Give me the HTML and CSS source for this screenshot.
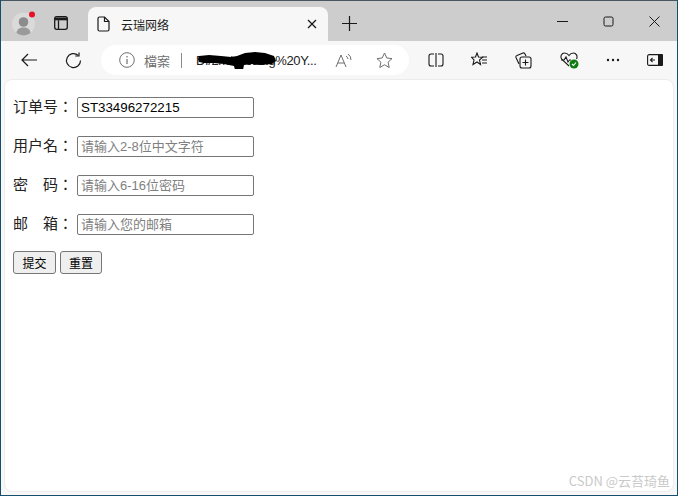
FILE: index.html
```html
<!DOCTYPE html>
<html lang="zh-CN">
<head>
<meta charset="utf-8">
<title>云瑞网络</title>
<link rel="stylesheet" href="styles.css">
</head>
<body>
<div class="window">
  <header class="titlebar">
    <div class="profile">
      <svg width="24" height="26" viewBox="0 0 24 26"><circle cx="11.500" cy="14" r="11.500" fill="#dadada"/><circle cx="11.500" cy="12" r="4.800" fill="#8c8c8c"/><path d="M4.500 23c.5-4 3-5.500 7-5.500s6.500 1.500 7 5.500c-2 1.500-4.500 2.500-7 2.500s-5-1-7-2.500z" fill="#9a9a9a"/><circle cx="20" cy="4.500" r="3" fill="#e81123"/></svg>
    </div>
    <div class="tab-actions">
      <svg width="16" height="16" viewBox="0 0 16 16" fill="none" stroke="#1a1a1a" stroke-width="1.300"><rect x="1.700" y="1.700" width="12.600" height="12.600" rx="2"/><path d="M5.500 5.200v9"/><path d="M2 2.500h12v2.800H2z" fill="#1a1a1a" stroke="none"/></svg>
    </div>
    <div class="tab">
      <svg class="tab-icon" width="13" height="16" viewBox="0 0 13 16" fill="none" stroke="#1a1a1a" stroke-width="1.200"><path d="M2.500 1h5l4.500 4.500V13.500a1.500 1.500 0 0 1-1.500 1.500h-8A1.500 1.500 0 0 1 1 13.500V2.500A1.500 1.500 0 0 1 2.500 1z"/><path d="M7.500 1v4.500H12"/></svg>
      <span class="tab-title">云瑞网络</span>
      <svg class="tab-close" width="10" height="10" viewBox="0 0 10 10" stroke="#1a1a1a" stroke-width="1.300"><path d="M1 1l8 8M9 1l-8 8"/></svg>
    </div>
    <div class="new-tab">
      <svg width="15" height="15" viewBox="0 0 15 15" stroke="#1a1a1a" stroke-width="1.200"><path d="M7.500 0v15M0 7.500h15"/></svg>
    </div>
    <div class="win-controls">
      <svg width="11" height="11" viewBox="0 0 11 11" stroke="#1a1a1a" fill="none"><path d="M0 5.500h11"/></svg>
      <svg width="11" height="11" viewBox="0 0 11 11" stroke="#1a1a1a" fill="none"><rect x="1" y="1" width="9" height="9" rx="1.500"/></svg>
      <svg width="11" height="11" viewBox="0 0 11 11" stroke="#1a1a1a" fill="none"><path d="M.5.500l10 10M10.500.500l-10 10"/></svg>
    </div>
  </header>
  <nav class="toolbar">
    <svg class="nav-back" width="16" height="14" viewBox="0 0 16 14" fill="none" stroke="#1a1a1a" stroke-width="1.200"><path d="M16 7H1M7 1L1 7l6 6"/></svg>
    <svg class="nav-reload" width="17" height="17" viewBox="0 0 17 17" fill="none" stroke="#1a1a1a" stroke-width="1.200"><path d="M15.500 8.500A7 7 0 1 1 13 3.200"/><path d="M14 .500v3.500h-3.700"/></svg>
    <div class="address">
      <svg class="info" width="16" height="16" viewBox="0 0 16 16" fill="none" stroke="#6e6e6e"><circle cx="8" cy="8" r="7.300"/><path d="M8 7v5M8 4v1.500" stroke-width="1.200"/></svg>
      <span class="site-label" lang="zh-TW">檔案</span>
      <span class="divider"></span>
      <span class="url">Df/2m/abcdefg%20Y...<svg class="redact" width="82" height="18" viewBox="0 0 82 18"><path d="M4 5l10-1 12 1 10 1 6-1 8-3 10-1 10 1 9 3 2 5-4 3-12 1-8-1-8 1-1 5h-8l-1-4-10-2-10-1-10 0-5-1-1-3z" fill="#000"/></svg></span>
      <svg class="read" width="17" height="15" viewBox="0 0 17 15" fill="none" stroke="#6e6e6e"><path d="M1 14L6 2l5 12M2.800 10h6.500"/><path d="M11 3a4 4 0 0 1 2 3M13 1a7 7 0 0 1 3 6"/></svg>
      <svg class="star" width="17" height="17" viewBox="0 0 17 17" fill="none" stroke="#6e6e6e"><path d="M8.500 1l2.300 5 5.200.600-3.900 3.600 1.100 5.300-4.700-2.700-4.700 2.700 1.100-5.300L1 6.600l5.200-.600z"/></svg>
    </div>
    <div class="tools">
      <svg width="16" height="14" viewBox="0 0 16 14" fill="none" stroke="#1a1a1a" stroke-width="1.100"><path d="M6 1H3a2 2 0 0 0-2 2v8a2 2 0 0 0 2 2h3M10 1h3a2 2 0 0 1 2 2v8a2 2 0 0 1-2 2h-3M8 0v14"/></svg>
      <svg width="17" height="16" viewBox="0 0 17 16" fill="none" stroke="#1a1a1a" stroke-width="1.100"><path d="M6 1l1.500 4 4 .300-3 2.700 1 4.500L6 10l-4 2.500 1-4.500L.500 5.300l4-.300z"/><path d="M11 5h5M11 8h5M11 11h5"/></svg>
      <svg width="17" height="17" viewBox="0 0 17 17" fill="none" stroke="#1a1a1a" stroke-width="1.100"><path d="M4 12L1 5.500Q.500 4 2 3.500L8 1q1.500-.500 2 1l1 2"/><rect x="5" y="5" width="11" height="11" rx="2"/><path d="M10.500 7.500v6M7.500 10.500h6"/></svg>
      <svg class="health" width="19" height="17" viewBox="0 0 19 17" fill="none" stroke="#1a1a1a" stroke-width="1.100"><path d="M9 14L2 7.500C-.5 4 2 1 4.500 1 6.500 1 8 2 9 3.500 10 2 11.500 1 13.500 1 16 1 18 4 16.500 7"/><path d="M1 8h3l2-3 2 5 1.500-2H11"/><circle cx="14" cy="12" r="4.500" fill="#107c10" stroke="none"/><path d="M12 12l1.500 1.500 2.500-3" stroke="#fff"/></svg>
      <svg width="14" height="4" viewBox="0 0 14 4" fill="#1a1a1a"><circle cx="2" cy="2" r="1.200"/><circle cx="7" cy="2" r="1.200"/><circle cx="12" cy="2" r="1.200"/></svg>
      <svg width="16" height="12" viewBox="0 0 16 12" fill="none" stroke="#1a1a1a" stroke-width="1.100"><rect x=".600" y=".600" width="14.800" height="10.800" rx="1.500"/><path d="M11 0h4a1 1 0 0 1 1 1v10a1 1 0 0 1-1 1h-4z" fill="#1a1a1a" stroke="none"/><path d="M8 6H3.500M5.500 4L3.500 6l2 2"/></svg>
    </div>
  </nav>
  <main class="page">
    <form class="form">
      <label class="row"><span class="label" lang="zh-TW">订单号：</span><input class="field" type="text" value="ST33496272215"></label>
      <label class="row"><span class="label" lang="zh-TW">用户名：</span><input class="field" type="text" placeholder="请输入2-8位中文字符"></label>
      <label class="row"><span class="label label-spread" lang="zh-TW"><span>密</span><span>码：</span></span><input class="field" type="text" placeholder="请输入6-16位密码"></label>
      <label class="row"><span class="label label-spread" lang="zh-TW"><span>邮</span><span>箱：</span></span><input class="field" type="text" placeholder="请输入您的邮箱"></label>
      <div class="buttons">
        <button class="btn btn-submit" type="button">提交</button>
        <button class="btn btn-reset" type="button">重置</button>
      </div>
    </form>
    <div class="watermark">CSDN @云苔琦鱼</div>
  </main>
</div>
</body>
</html>
```

FILE: styles.css
```css
* { box-sizing: border-box; }
html, body { margin: 0; height: 100%; }
body {
  width: 678px;
  height: 496px;
  overflow: hidden;
  padding: 0 1px 1px 1px;
  font-family: "Liberation Sans", "Noto Sans CJK SC", sans-serif;
  background: #14506e;
}
.window {
  height: 495px;
  background: #f7f7f7;
  border-top: 1px solid #4a5660;
  display: flex;
  flex-direction: column;
  padding-bottom: 3px;
}
.titlebar {
  height: 40px;
  flex: none;
  background: #cdcdcd;
  display: flex;
  align-items: flex-end;
}
.profile { width: 43px; height: 33px; padding: 5px 0 0 11px; margin-bottom: 3px; }
.tab-actions { width: 44px; height: 29px; padding-left: 9px; padding-top: 4px; margin-bottom: 1px; }
.tab {
  width: 240px;
  height: 34px;
  background: #f7f7f7;
  border-radius: 8px 8px 0 0;
  display: flex;
  align-items: center;
  padding: 0 11px 0 9px;
}
.tab-icon { flex: none; }
.tab-title {
  margin-left: 11px;
  flex: 1;
  font-size: 12px;
  font-family: "Noto Sans CJK SC", sans-serif;
  color: #222;
}
.new-tab { width: 42px; height: 34px; padding: 9px 0 0 14px; }
.win-controls {
  margin-left: auto;
  height: 40px;
  padding: 15px 17px 0 0;
  display: flex;
  gap: 35px;
  align-self: flex-start;
}
.toolbar {
  height: 38px;
  flex: none;
  display: flex;
  align-items: center;
  padding-left: 20px;
}
.nav-back { flex: none; }
.nav-reload { margin-left: 28px; flex: none; }
.address {
  margin-left: 19px;
  width: 308px;
  height: 30px;
  flex: none;
  background: #fff;
  border-radius: 15px;
  display: flex;
  align-items: center;
  padding-left: 18px;
}
.info { flex: none; }
.site-label { margin-left: 9px; font-size: 13px; color: #6e6e6e; font-family: "Noto Sans CJK TC", sans-serif; }
.divider { width: 1px; height: 15px; background: #8a8a8a; margin-left: 11px; }
.url { margin-left: 14px; font-size: 13px; color: #222; width: 120px; white-space: nowrap; position: relative; letter-spacing: -0.400px; }
.redact { position: absolute; left: -1px; top: -2px; }
.read { margin-left: 19px; flex: none; }
.star { margin-left: 24px; flex: none; }
.tools {
  margin-left: 19px;
  width: 235px;
  display: flex;
  align-items: center;
  justify-content: space-between;
}
.page {
  flex: 1;
  margin: 0 3px;
  background: #fff;
  border: 1px solid #ececec;
  border-radius: 8px;
  position: relative;
}
.form {
  padding: 17px 0 0 8px;
  display: flex;
  flex-direction: column;
  gap: 18px;
}
.row { display: flex; align-items: center; height: 21px; }
.label {
  width: 64px;
  font-size: 15px;
  font-family: "Noto Sans CJK TC", sans-serif;
  color: #222;
  white-space: nowrap;
  flex: none;
  margin-top: -5px;
}
.label-spread { display: flex; justify-content: space-between; width: 60px; margin-right: 4px; }
.field {
  width: 177px;
  height: 21px;
  padding: 1px 3px;
  border: 1px solid #767676;
  border-radius: 2px;
  font-size: 13.333px;
  font-family: "Liberation Sans", "Noto Sans CJK SC", sans-serif;
  color: #000;
  background: #fff;
  outline: none;
}
.field::placeholder { color: #808080; font-size: 13px; opacity: 1; }
.buttons { display: flex; gap: 4px; margin-top: -2px; }
.btn {
  height: 23px;
  padding: 0;
  border: 1px solid #767676;
  border-radius: 3px;
  background: #efefef;
  font-size: 12px;
  font-family: "Noto Sans CJK SC", sans-serif;
  color: #000;
}
.btn-submit { width: 43px; }
.btn-reset { width: 42px; }
.watermark {
  position: absolute;
  right: 3px;
  bottom: 1px;
  font-size: 13px;
  font-family: "Noto Sans CJK SC", sans-serif;
  color: #c9c9c9;
}
```
